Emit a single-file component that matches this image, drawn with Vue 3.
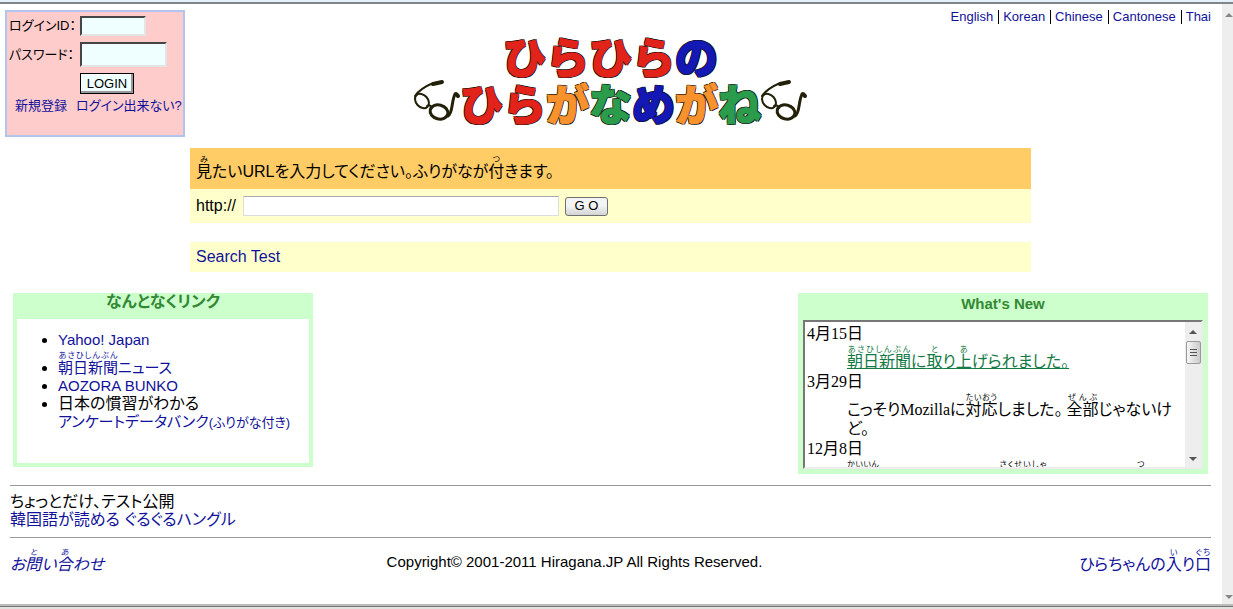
<script setup>
	import { ref } from "vue";

	const languages = ["English", "Korean", "Chinese", "Cantonese", "Thai"];

	const logoTop = [
		{ char: "ひ", color: "red" },
		{ char: "ら", color: "red" },
		{ char: "ひ", color: "red" },
		{ char: "ら", color: "red" },
		{ char: "の", color: "blue" },
	];

	const logoBottom = [
		{ char: "ひ", color: "red" },
		{ char: "ら", color: "red" },
		{ char: "が", color: "orange" },
		{ char: "な", color: "green" },
		{ char: "め", color: "blue" },
		{ char: "が", color: "orange" },
		{ char: "ね", color: "green" },
	];

	const loginId = ref("");
	const password = ref("");
	const url = ref("");
</script>

<template>
	<div class="window">
		<div class="window-top"></div>
		<div class="window-body">
			<div class="page">
				<header class="header">
					<form
						class="login"
						@submit.prevent>
						<label for="login-id">ログインID：</label>
						<input
							id="login-id"
							v-model="loginId"
							class="login-id"
							type="text" />
						<label for="login-password">パスワード：</label>
						<input
							id="login-password"
							v-model="password"
							class="login-password"
							type="password" />
						<button
							class="login-button"
							type="submit">
							LOGIN
						</button>
						<div class="login-links">
							<a href="#">新規登録</a>
							<a href="#">ログイン出来ない?</a>
						</div>
					</form>

					<nav class="languages">
						<a
							v-for="language in languages"
							:key="language"
							href="#"
							>{{ language }}</a
						>
					</nav>

					<h1 class="logo">
						<span class="logo-line">
							<span
								v-for="(letter, i) in logoTop"
								:key="i"
								:class="letter.color"
								>{{ letter.char }}</span
							>
						</span>
						<span class="logo-line">
							<svg
								class="glasses"
								viewBox="0 0 46 42"
								aria-hidden="true">
								<ellipse cx="8" cy="18" rx="6" ry="8" transform="rotate(-42 8 18)" stroke-width="2" />
								<ellipse cx="25" cy="29" rx="9" ry="7" transform="rotate(14 25 29)" stroke-width="3" />
								<path d="M13 23q3-2 5 2M1 13C4 8 12 3 17 1l10-2" stroke-width="2" />
								<path d="M19 1l9-2M42 11l2 2" stroke-width="4" />
								<path d="M34 33c5-3 3-13 7-22" stroke-width="3" />
							</svg>
							<span
								v-for="(letter, i) in logoBottom"
								:key="i"
								:class="letter.color"
								>{{ letter.char }}</span
							>
							<svg
								class="glasses"
								viewBox="0 0 46 42"
								aria-hidden="true">
								<ellipse cx="8" cy="18" rx="6" ry="8" transform="rotate(-42 8 18)" stroke-width="2" />
								<ellipse cx="25" cy="29" rx="9" ry="7" transform="rotate(14 25 29)" stroke-width="3" />
								<path d="M13 23q3-2 5 2M1 13C4 8 12 3 17 1l10-2" stroke-width="2" />
								<path d="M19 1l9-2M42 11l2 2" stroke-width="4" />
								<path d="M34 33c5-3 3-13 7-22" stroke-width="3" />
							</svg>
						</span>
					</h1>

					<form
						class="search"
						@submit.prevent>
						<p class="search-title">
							<ruby>見<rt>み</rt></ruby>たいURLを入力してください。ふりがなが<ruby>付<rt>つ</rt></ruby>きます。
						</p>
						<div class="search-row">
							<label for="url">http://</label>
							<input
								id="url"
								v-model="url"
								type="text" />
							<button type="submit">G O</button>
						</div>
					</form>
					<div class="search-test"><a href="#">Search Test</a></div>
				</header>

				<main class="panels">
					<section class="panel links">
						<h2>なんとなくリンク</h2>
						<ul>
							<li><a href="#">Yahoo! Japan</a></li>
							<li class="with-ruby">
								<a href="#"><ruby>朝日新聞<rt>あさひしんぶん</rt></ruby>ニュース</a>
							</li>
							<li><a href="#">AOZORA BUNKO</a></li>
							<li>
								日本の慣習がわかる<br />
								<a href="#">アンケートデータバンク<small>(ふりがな付き)</small></a>
							</li>
						</ul>
					</section>

					<section class="panel news">
						<h2>What's New</h2>
						<div class="news-frame">
							<dl>
								<dt>4月15日</dt>
								<dd>
									<a href="#"><ruby>朝日新聞<rt>あさひしんぶん</rt></ruby>に<ruby>取<rt>と</rt></ruby>り<ruby>上<rt>あ</rt></ruby>げられました。</a>
								</dd>
								<dt>3月29日</dt>
								<dd>
									こっそりMozillaに<ruby>対応<rt>たいおう</rt></ruby>しました。 <ruby>全部<rt>ぜんぶ</rt></ruby>じゃないけど。
								</dd>
								<dt>12月8日</dt>
								<dd>
									<ruby>会員<rt>かいいん</rt></ruby>のページにリンク<ruby>作成者<rt>さくせいしゃ</rt></ruby>のコメントを<ruby>付<rt>つ</rt></ruby>けました。
								</dd>
							</dl>
							<div
								class="news-scroll"
								aria-hidden="true">
								<span class="arrow up"></span>
								<span class="thumb"></span>
								<span class="arrow down"></span>
							</div>
						</div>
					</section>
				</main>

				<section class="notice">
					ちょっとだけ、テスト公開<br />
					<a href="#">韓国語が読める ぐるぐるハングル</a>
				</section>

				<footer class="footer">
					<a
						class="contact"
						href="#"
						>お<ruby>問<rt>と</rt></ruby>い<ruby>合<rt>あ</rt></ruby>わせ</a
					>
					<p>Copyright© 2001-2011 Hiragana.JP All Rights Reserved.</p>
					<a
						class="entrance"
						href="#"
						>ひらちゃんの<ruby>入<rt>い</rt></ruby>り<ruby>口<rt>ぐち</rt></ruby></a
					>
				</footer>
			</div>
			<div
				class="page-scroll"
				aria-hidden="true">
				<span class="arrow up"></span>
				<span class="arrow down"></span>
			</div>
		</div>
		<div class="window-bottom"></div>
	</div>
</template>

<style>
	body {
		background: #fff;
		margin: 0;
	}
</style>

<style scoped>
	.window {
		box-sizing: border-box;
		color: #000;
		display: flex;
		flex-direction: column;
		font-family: "Liberation Sans", "Noto Sans CJK JP", sans-serif;
		font-feature-settings: "palt";
		font-size: 15px;
		line-height: 18px;
		min-height: 100vh;
	}

	.window-top {
		background: #e6f0fa;
		border-bottom: 2px solid #7f858c;
		height: 2px;
	}

	.window-body {
		display: flex;
		flex: 1;
	}

	.window-bottom {
		background: #777;
		border-bottom: 2px solid #dfe3dc;
		border-top: 2px solid #bbb;
		height: 1px;
	}

	.page {
		flex: 1;
		min-width: 0;
	}

	a {
		color: #11119a;
		text-decoration: none;
	}

	rt {
		font-size: 8px;
	}

	.header {
		display: grid;
		grid-template-columns: 185px 1fr 180px;
		grid-template-rows: 24px auto;
		padding: 6px 11px 0 5px;
	}

	.login {
		align-content: start;
		align-items: center;
		background: #fcc;
		border: 2px solid #b0c4ee;
		box-sizing: border-box;
		display: grid;
		font-size: 13px;
		grid-column: 1;
		grid-row: 1 / 3;
		grid-template-columns: 71px 1fr;
		height: 127px;
		justify-items: start;
		margin-bottom: 11px;
		padding: 4px 2px;
		row-gap: 6px;
		white-space: nowrap;
		width: 180px;
	}

	.login input {
		background: #efffff;
		border: 2px inset #999;
		border-bottom-color: #e4e4e4;
		border-right-color: #e4e4e4;
		box-sizing: border-box;
		padding: 0;
	}

	.login .login-id {
		height: 20px;
		width: 66px;
	}

	.login .login-password {
		height: 25px;
		width: 87px;
	}

	.login-button {
		background: #efffff;
		border: 1px solid #000;
		box-shadow: inset -2px -2px 0 #999, inset 1px 1px 0 #fff;
		font-family: inherit;
		font-size: 13px;
		grid-column: 2;
		height: 21px;
		line-height: 18px;
		padding: 0;
		width: 54px;
	}

	.login-links {
		display: flex;
		gap: 9px;
		grid-column: 1 / 3;
		line-height: 12px;
		padding-left: 6px;
	}

	.languages {
		align-items: flex-start;
		display: flex;
		font-size: 13px;
		grid-column: 2 / 4;
		grid-row: 1;
		justify-content: flex-end;
		line-height: 14px;
	}

	.languages a + a {
		border-left: 1px solid #000;
		margin-left: 5px;
		padding-left: 4px;
	}

	.logo {
		display: flex;
		flex-direction: column;
		font-size: 43px;
		font-weight: 900;
		grid-column: 2;
		grid-row: 2;
		line-height: 47px;
		margin: 0;
		padding-top: 2px;
	}

	.logo-line {
		display: flex;
		font-feature-settings: normal;
		height: 47px;
		justify-content: center;
	}

	.logo-line span {
		-webkit-text-stroke: 1px currentColor;
		text-shadow: 1px 1px #111, -1px 1px #111, 1px -1px #111, -1px -1px #111;
	}

	.red {
		color: #e2231a;
	}

	.blue {
		color: #1418b4;
	}

	.orange {
		color: #f7922d;
	}

	.green {
		color: #2b9c4b;
	}

	.glasses {
		fill: none;
		height: 42px;
		overflow: visible;
		stroke: #222008;
		stroke-linecap: round;
		stroke-linejoin: round;
		width: 46px;
	}

	.search {
		grid-column: 2;
	}

	.search-title {
		background: #fc6;
		font-size: 16px;
		margin: 0;
		padding: 15px 6px 8px;
	}

	.search-row {
		align-items: center;
		background: #ffc;
		display: flex;
		font-size: 16px;
		height: 34px;
		padding-left: 6px;
	}

	.search-row input {
		border: 1px solid #ddd;
		border-top-color: #aaa;
		box-sizing: border-box;
		height: 20px;
		padding: 0 2px;
		width: 316px;
	}

	.search-row button {
		background: linear-gradient(#f4f4f4 45%, #d4d4d4);
		border: 1px solid #707070;
		border-radius: 3px;
		font-family: inherit;
		font-size: 13px;
		height: 19px;
		line-height: 16px;
		margin-left: 6px;
		padding: 0;
		width: 43px;
	}

	.search-row label {
		width: 47px;
	}

	.search-test {
		background: #ffc;
		font-size: 16px;
		grid-column: 2;
		margin-top: 19px;
		padding: 6px;
	}

	.panels {
		align-items: flex-start;
		display: flex;
		justify-content: space-between;
		padding: 21px 14px 11px 13px;
	}

	.panel {
		background: #cfc;
		box-sizing: border-box;
	}

	.panel h2 {
		color: #383;
		font-size: 15px;
		line-height: 18px;
		margin: 0;
		text-align: center;
	}

	.links {
		padding: 0 4px 4px;
		width: 300px;
	}

	.links h2 {
		font-size: 16px;
		padding-bottom: 8px;
	}

	.links ul {
		background: #fff;
		font-size: 16px;
		height: 132px;
		margin: 0;
		padding: 12px 0 0 41px;
		white-space: nowrap;
	}

	.links .with-ruby {
		margin-top: 2px;
	}

	.links li a {
		font-size: 15px;
	}

	.links small {
		font-size: 13px;
	}

	.news {
		padding: 2px 5px 5px;
		width: 410px;
	}

	.news h2 {
		padding-bottom: 7px;
	}

	.news-frame {
		background: #fff;
		border: 2px solid #ececec;
		border-left-color: #777;
		border-top-color: #777;
		box-sizing: border-box;
		display: flex;
		font-family: "Liberation Serif", "Noto Sans CJK JP", serif;
		font-size: 16px;
		height: 149px;
		line-height: 19px;
		overflow: hidden;
	}

	.news-frame dl {
		flex: 1;
		margin: 0;
		padding: 2px 8px 0 2px;
	}

	.news-frame dd {
		margin: 2px 0 1px 40px;
	}

	.news-frame a {
		color: #147a45;
		text-decoration: underline;
	}

	.news-scroll,
	.page-scroll {
		align-items: center;
		background: #eee;
		display: flex;
		flex-direction: column;
	}

	.news-scroll {
		padding: 8px 0 6px;
		width: 16px;
	}

	.page-scroll {
		align-items: flex-end;
		padding: 9px 0 5px;
		width: 11px;
	}

	.arrow {
		border-left: 4px solid transparent;
		border-right: 4px solid transparent;
	}

	.up {
		border-bottom: 4px solid #555;
	}

	.down {
		border-top: 4px solid #555;
		margin-top: auto;
	}

	.page-scroll .arrow {
		border-bottom-color: #888;
		border-top-color: #888;
	}

	.thumb {
		background: linear-gradient(#555, #555) center 7px / 7px 1px no-repeat,
			linear-gradient(#555, #555) center 10px / 7px 1px no-repeat,
			linear-gradient(#555, #555) center 13px / 7px 1px no-repeat,
			linear-gradient(90deg, #f6f6f6, #ccc);
		border: 1px solid #999;
		border-radius: 2px;
		height: 21px;
		margin-top: 7px;
		width: 13px;
	}

	.notice,
	.footer {
		border-top: 1px solid #999;
		font-size: 16px;
		margin: 0 11px 0 10px;
	}

	.notice {
		padding: 7px 0 8px;
	}

	.footer {
		align-items: end;
		display: grid;
		grid-template-columns: 30% 34% 36%;
		padding-top: 10px;
	}

	.footer p {
		font-size: 15px;
		margin: 0 0 3px;
		text-align: center;
		white-space: nowrap;
	}

	.contact {
		font-style: italic;
	}

	.entrance {
		text-align: right;
	}
</style>
